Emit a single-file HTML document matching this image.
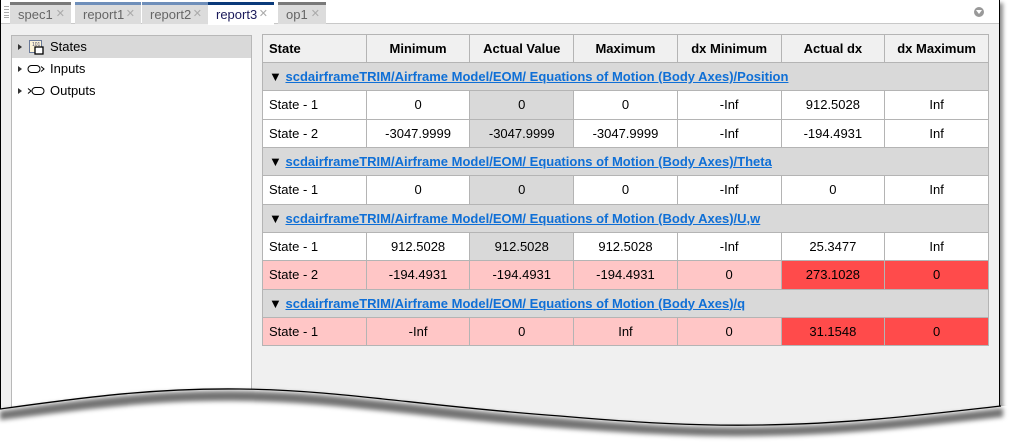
<!DOCTYPE html>
<html><head><style>
*{box-sizing:border-box;margin:0;padding:0}
body{width:1014px;height:445px;background:#fff;position:relative;overflow:hidden;font-family:"Liberation Sans",Arial,sans-serif;font-size:13px;color:#000}
#win{position:absolute;left:0;top:0;width:1000px;height:440px;background:#f0f0f0;border:1px solid #000;border-top:none;box-shadow:3px 3px 4px rgba(0,0,0,.45)}
#tabbar{position:absolute;left:0;top:0;width:998px;height:24px;background:#fff;border-bottom:1px solid #c8c8c8}
.tab{position:absolute;top:2px;height:22px;background:#dcdcdc;border-top:3px solid #7a7a7a;color:#666;font-size:13px;line-height:19px;padding-left:8px}
.tab .x{position:absolute;right:6px;top:0;color:#aaa;font-size:11px}
.tab.b{border-top-color:#6f8fba}
.tab.act{background:#fff;border-top-color:#0a3a7a;color:#1a1a5a;height:23px}
#left{position:absolute;left:10px;top:35px;width:241px;height:380px;background:#fff;border:1px solid #b8b8b8;border-bottom:none}
.ti{height:22px;line-height:22px;position:relative;padding-left:38px;font-size:13px}
.ti.sel{background:#d9d9d9}
.ti .arr{position:absolute;left:6px;top:8px;width:0;height:0;border-left:4px solid #333;border-top:3.5px solid transparent;border-bottom:3.5px solid transparent}
table{position:absolute;left:261px;top:34px;border-collapse:collapse;table-layout:fixed;width:727px}
td,th{border:1px solid #b4b4b4;text-align:center;font-size:13px;height:28.5px;padding:0;background:#fff}
th{background:#f0f0f0;font-weight:bold;height:28px}
td:first-child,th:first-child{text-align:left;padding-left:6px}
tr.g td{background:#d9d9d9;text-align:left;padding-left:6px;height:28px;font-weight:bold}
tr.g a{color:#0f6fd6;text-decoration:underline}
td.av{background:#d9d9d9}
tr.p td{background:#ffc6c6}
tr.p td.r{background:#ff4b4b}
</style></head><body>
<div id="win">
<div id="tabbar">
<div style="position:absolute;left:3px;top:6px;width:5px;height:12px;border-top:1px solid #aaa;border-bottom:1px solid #aaa;background:repeating-linear-gradient(#fff 0 2px,#aaa 2px 3px)"></div>
<div class="tab" style="left:9px;width:61px">spec1<span class="x">✕</span></div>
<div class="tab b" style="left:74px;width:66px">report1<span class="x">✕</span></div>
<div class="tab b" style="left:141px;width:66px">report2<span class="x">✕</span></div>
<div class="tab act" style="left:207px;width:66px">report3<span class="x">✕</span></div>
<div class="tab" style="left:277px;width:48px">op1<span class="x">✕</span></div>
<div style="position:absolute;left:973px;top:7px;width:10px;height:10px;border-radius:50%;background:#999"><div style="position:absolute;left:2px;top:3px;border-top:4px solid #fff;border-left:3px solid transparent;border-right:3px solid transparent"></div></div>
</div>
<div id="left">
<div class="ti sel"><span class="arr"></span><svg style="position:absolute;left:16px;top:3px" width="16" height="16"><rect x="1.5" y="1.5" width="12" height="12" fill="#fdf4d8" stroke="#6a7a9a"/><text x="4" y="7" font-size="5" fill="#446">101</text><rect x="7" y="8" width="8" height="7" fill="#fff" stroke="#000" stroke-width="1.3"/></svg>States</div>
<div class="ti"><span class="arr"></span><svg style="position:absolute;left:15px;top:6px" width="20" height="10"><rect x="1" y="1.5" width="12" height="7" rx="3.5" fill="none" stroke="#000"/><path d="M14 2.5l3 2.5-3 2.5" fill="none" stroke="#000"/></svg>Inputs</div>
<div class="ti"><span class="arr"></span><svg style="position:absolute;left:15px;top:6px" width="20" height="10"><path d="M1 2.5l3 2.5-3 2.5" fill="none" stroke="#000"/><rect x="5" y="1.5" width="12" height="7" rx="3.5" fill="none" stroke="#000"/></svg>Outputs</div>
</div>
<table>
<colgroup><col><col><col><col><col><col><col></colgroup>
<tr><th>State</th><th>Minimum</th><th>Actual Value</th><th>Maximum</th><th>dx Minimum</th><th>Actual dx</th><th>dx Maximum</th></tr>
<tr class="g"><td colspan="7">▼ <a>scdairframeTRIM/Airframe Model/EOM/ Equations of Motion (Body Axes)/Position</a></td></tr>
<tr><td>State - 1</td><td>0</td><td class="av">0</td><td>0</td><td>-Inf</td><td>912.5028</td><td>Inf</td></tr>
<tr><td>State - 2</td><td>-3047.9999</td><td class="av">-3047.9999</td><td>-3047.9999</td><td>-Inf</td><td>-194.4931</td><td>Inf</td></tr>
<tr class="g"><td colspan="7">▼ <a>scdairframeTRIM/Airframe Model/EOM/ Equations of Motion (Body Axes)/Theta</a></td></tr>
<tr><td>State - 1</td><td>0</td><td class="av">0</td><td>0</td><td>-Inf</td><td>0</td><td>Inf</td></tr>
<tr class="g"><td colspan="7">▼ <a>scdairframeTRIM/Airframe Model/EOM/ Equations of Motion (Body Axes)/U,w</a></td></tr>
<tr><td>State - 1</td><td>912.5028</td><td class="av">912.5028</td><td>912.5028</td><td>-Inf</td><td>25.3477</td><td>Inf</td></tr>
<tr class="p"><td>State - 2</td><td>-194.4931</td><td>-194.4931</td><td>-194.4931</td><td>0</td><td class="r">273.1028</td><td class="r">0</td></tr>
<tr class="g"><td colspan="7">▼ <a>scdairframeTRIM/Airframe Model/EOM/ Equations of Motion (Body Axes)/q</a></td></tr>
<tr class="p"><td>State - 1</td><td>-Inf</td><td>0</td><td>Inf</td><td>0</td><td class="r">31.1548</td><td class="r">0</td></tr>
</table>
</div>
<svg style="position:absolute;left:0;top:0" width="1014" height="445">
<defs><filter id="s" x="-5%" y="-50%" width="110%" height="200%"><feGaussianBlur stdDeviation="2.5"/></filter></defs>
<path d="M-1 409 C80 398 150 388 240 389 C340 390 420 406 560 416 C640 423 700 426 760 425 C850 424 930 414 1003 406 L1014 406 L1014 445 L-1 445Z" fill="#fff"/>
<path d="M0 411 C80 400 150 390 240 391 C340 392 420 408 560 418 C640 425 700 428 760 427 C850 426 930 416 1003 408 L1003 417 C930 425 850 435 760 436 C700 437 640 434 560 428 C420 418 340 402 240 401 C150 400 80 410 0 420Z" fill="rgba(0,0,0,.55)" filter="url(#s)"/>
<path d="M0 409 C80 398 150 388 240 389 C340 390 420 406 560 416 C640 423 700 426 760 425 C850 424 930 414 1001 406" fill="none" stroke="#000" stroke-width="1.3"/>
</svg>
</body></html>
